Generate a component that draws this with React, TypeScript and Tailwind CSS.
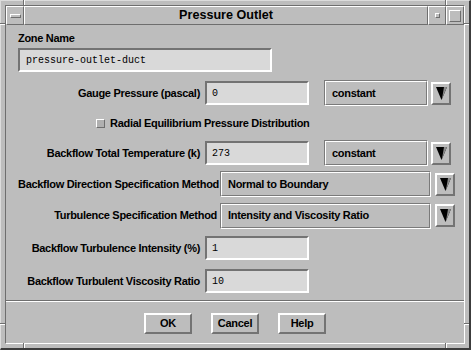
import type { ReactNode } from 'react'

const raised = 'border-t-2 border-l-2 border-b-2 border-r-2 border-t-white border-l-white border-b-[#737373] border-r-[#737373]'
const sunken = 'border-t-2 border-l-2 border-b-2 border-r-2 border-t-[#737373] border-l-[#737373] border-b-white border-r-white'

function TextField({ value, className = '' }: { value: string; className?: string }) {
  return (
    <div className={`h-[24px] bg-[#d9d9d9] ${sunken} flex items-center pl-[5px] font-['Liberation_Mono',monospace] text-[10px] tracking-normal text-black font-normal ${className}`}>
      {value}
    </div>
  )
}

function ArrowButton({ className = '' }: { className?: string }) {
  return (
    <div className={`w-[20px] h-[23px] ${raised} flex items-center justify-center ${className}`}>
      <svg width="11" height="13" viewBox="0 0 11 13">
        <polygon points="0,0 11,0 5.5,13" fill="#000" />
        <polygon points="8,0 11,0 5.5,13 6.5,9" fill="#8a8a8a" />
      </svg>
    </div>
  )
}

function Option({ value, className = '' }: { value: string; className?: string }) {
  return (
    <div className={`h-[26px] border border-t-[#7a7a7a] border-l-[#7a7a7a] border-b-white border-r-white flex items-center ${className}`}>
      <div className="h-full w-full border border-t-white border-l-white border-b-[#7a7a7a] border-r-[#7a7a7a] flex items-center pl-[6px]">
        {value}
      </div>
    </div>
  )
}

function Row({ h, children }: { h: string; children: ReactNode }) {
  return <div className={`flex items-center whitespace-nowrap ${h}`}>{children}</div>
}

function Notch({ className }: { className: string }) {
  return <div className={`absolute ${className}`} />
}

export default function App() {
  return (
    <div className="relative w-[471px] h-[350px] bg-[#bdbdbd] text-black font-['Liberation_Sans',Arial,sans-serif] font-bold text-[11px] tracking-[-0.3px] overflow-hidden">
      <div className="h-full flex flex-col border-t border-l border-t-[#dcdcdc] border-l-[#dcdcdc] border-r-2 border-b-2 border-r-[#3c3c3c] border-b-[#3c3c3c] p-[4px]">
        <div className="flex-1 flex flex-col border border-t-[#6e6e6e] border-l-[#6e6e6e] border-b-white border-r-white">
          {/* title bar */}
          <div className="flex h-[19px]">
            <div className="w-[18px] border border-t-white border-l-white border-b-[#6e6e6e] border-r-[#6e6e6e] flex items-center justify-center">
              <div className="w-[11px] h-[4px] border border-t-white border-l-white border-b-[#6e6e6e] border-r-[#6e6e6e]" />
            </div>
            <div className="flex-1 border border-t-white border-l-white border-b-[#6e6e6e] border-r-[#6e6e6e] flex items-center justify-center text-[12.6px] tracking-normal leading-none">
              Pressure Outlet
            </div>
            <div className="w-[18px] border border-t-white border-l-white border-b-[#6e6e6e] border-r-[#6e6e6e] flex items-center justify-center">
              <div className="w-[5px] h-[5px] border border-t-white border-l-white border-b-[#6e6e6e] border-r-[#6e6e6e]" />
            </div>
            <div className="w-[18px] border border-t-white border-l-white border-b-[#6e6e6e] border-r-[#6e6e6e] flex items-center justify-center">
              <div className="w-[12px] h-[12px] border border-t-white border-l-white border-b-[#6e6e6e] border-r-[#6e6e6e]" />
            </div>
          </div>

          {/* client area */}
          <div className="flex-1 flex flex-col">
            <div className="pl-[12px]">
              <div className="mt-[6px] h-[14px] leading-[14px]">Zone Name</div>
              <TextField value="pressure-outlet-duct" className="mt-[3px] w-[254px] pl-[6px]" />

              <div className="mt-[6px]">
                <Row h="h-[30px]">
                  <div className="w-[182px] text-right">Gauge Pressure (pascal)</div>
                  <TextField value="0" className="ml-[5px] w-[104px]" />
                  <Option value="constant" className="ml-[15px] w-[104px]" />
                  <ArrowButton className="ml-[3px]" />
                </Row>
                <Row h="h-[30px]">
                  <div className="w-[78px]" />
                  <div className="w-[9px] h-[9px] bg-[#b0b0b0] border border-t-white border-l-white border-b-[#6e6e6e] border-r-[#6e6e6e]" />
                  <div className="ml-[5px]">Radial Equilibrium Pressure Distribution</div>
                </Row>
                <Row h="h-[30px]">
                  <div className="w-[182px] text-right">Backflow Total Temperature (k)</div>
                  <TextField value="273" className="ml-[5px] w-[104px]" />
                  <Option value="constant" className="ml-[15px] w-[104px]" />
                  <ArrowButton className="ml-[3px]" />
                </Row>
                <Row h="h-[32px]">
                  <div className="w-[199px] text-right">Backflow Direction Specification Method</div>
                  <Option value="Normal to Boundary" className="ml-[3px] w-[211px]" />
                  <ArrowButton className="ml-[4px]" />
                </Row>
                <Row h="h-[31px]">
                  <div className="w-[199px] text-right">Turbulence Specification Method</div>
                  <Option value="Intensity and Viscosity Ratio" className="ml-[3px] w-[211px]" />
                  <ArrowButton className="ml-[4px]" />
                </Row>
                <Row h="h-[34px]">
                  <div className="w-[182px] text-right">Backflow Turbulence Intensity (%)</div>
                  <TextField value="1" className="ml-[5px] w-[104px]" />
                </Row>
                <Row h="h-[32px]">
                  <div className="w-[182px] text-right">Backflow Turbulent Viscosity Ratio</div>
                  <TextField value="10" className="ml-[5px] w-[104px]" />
                </Row>
              </div>
            </div>

            <div className="mt-[3px] h-[2px] border-t border-t-[#6e6e6e] border-b border-b-white" />

            <div className="mt-[11px] flex justify-center gap-[19px]">
              {['OK', 'Cancel', 'Help'].map((b) => (
                <div key={b} className={`w-[48px] h-[21px] ${raised} flex items-center justify-center`}>
                  {b}
                </div>
              ))}
            </div>
          </div>
        </div>
      </div>

      {/* frame corner notches */}
      <Notch className="left-[23px] top-0 w-[2px] h-[5px] border-l border-l-[#6e6e6e] border-r border-r-white" />
      <Notch className="left-[445px] top-0 w-[2px] h-[5px] border-l border-l-[#6e6e6e] border-r border-r-white" />
      <Notch className="left-[23px] bottom-[2px] w-[2px] h-[5px] border-l border-l-[#6e6e6e] border-r border-r-white" />
      <Notch className="left-[445px] bottom-[2px] w-[2px] h-[5px] border-l border-l-[#6e6e6e] border-r border-r-white" />
      <Notch className="left-0 top-[23px] h-[2px] w-[5px] border-t border-t-[#6e6e6e] border-b border-b-white" />
      <Notch className="right-[2px] top-[23px] h-[2px] w-[5px] border-t border-t-[#6e6e6e] border-b border-b-white" />
      <Notch className="left-0 top-[323px] h-[2px] w-[5px] border-t border-t-[#6e6e6e] border-b border-b-white" />
      <Notch className="right-[2px] top-[323px] h-[2px] w-[5px] border-t border-t-[#6e6e6e] border-b border-b-white" />
    </div>
  )
}
